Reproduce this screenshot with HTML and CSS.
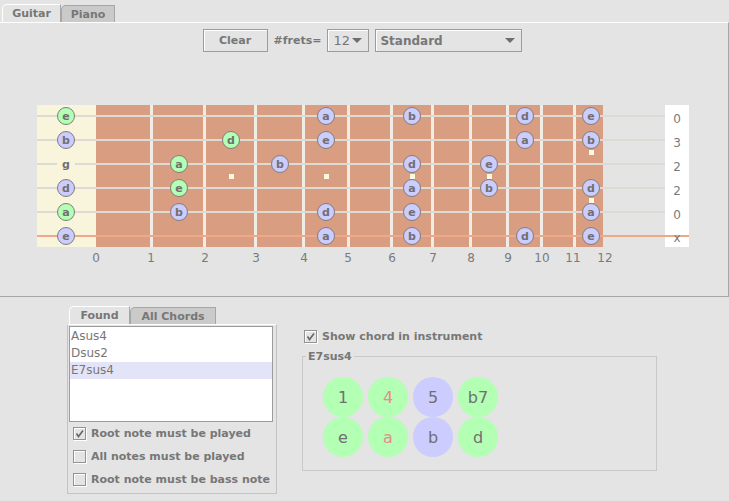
FILE: index.html
```html
<!DOCTYPE html>
<html>
<head>
<meta charset="utf-8">
<link rel="stylesheet" href="styles.css">
</head>
<body>
<div class="app">
  <div class="tabs top-tabs">
    <div class="tab active guitar">Guitar</div>
    <div class="tab piano">Piano</div>
  </div>
  <div class="panel">
    <div class="toolbar">
      <div class="button">Clear</div>
      <span class="label">#frets=</span>
      <div class="combo small"><span class="num">12</span><span class="arrow"></span></div>
      <div class="combo wide"><span>Standard</span><span class="arrow"></span></div>
    </div>
    <svg class="fretboard" width="729" height="170" viewBox="0 100 729 170" shape-rendering="crispEdges">
      <rect class="nut" x="37" y="105" width="59" height="142"/>
      <rect class="board" x="96" y="105" width="507" height="142"/>
      <g class="frets">
        <rect x="150" y="105" width="3" height="142"/>
        <rect x="203" y="105" width="3" height="142"/>
        <rect x="254" y="105" width="3" height="142"/>
        <rect x="302" y="105" width="3" height="142"/>
        <rect x="347" y="105" width="3" height="142"/>
        <rect x="390" y="105" width="3" height="142"/>
        <rect x="431" y="105" width="3" height="142"/>
        <rect x="469" y="105" width="3" height="142"/>
        <rect x="506" y="105" width="3" height="142"/>
        <rect x="540" y="105" width="3" height="142"/>
        <rect x="573" y="105" width="3" height="142"/>
      </g>
      <g class="strings">
        <rect x="37" y="115" width="628" height="2"/>
        <rect x="37" y="139" width="628" height="2"/>
        <rect x="37" y="163" width="628" height="2"/>
        <rect x="37" y="187" width="628" height="2"/>
        <rect x="37" y="211" width="628" height="2"/>
      </g>
      <rect class="tuning-box" x="665" y="105" width="24" height="142"/>
      <rect class="low-e" x="37" y="235" width="652" height="2"/>
      <rect class="nut" x="57" y="158" width="18" height="12"/>
      <text class="open" x="66" y="168">g</text>
      <g class="markers">
        <rect x="229" y="174" width="5" height="5"/>
        <rect x="324" y="174" width="5" height="5"/>
        <rect x="410" y="174" width="5" height="5"/>
        <rect x="487" y="174" width="5" height="5"/>
        <rect x="589" y="150" width="5" height="5"/>
        <rect x="589" y="198" width="5" height="5"/>
      </g>
      <g shape-rendering="auto">
        <g class="ng"><circle cx="66" cy="116" r="8.5"/><text x="66" y="120">e</text></g>
        <g class="nl"><circle cx="66" cy="140" r="8.5"/><text x="66" y="144">b</text></g>
        <g class="nl"><circle cx="66" cy="188" r="8.5"/><text x="66" y="192">d</text></g>
        <g class="ng"><circle cx="66" cy="212" r="8.5"/><text x="66" y="216">a</text></g>
        <g class="nl"><circle cx="66" cy="236" r="8.5"/><text x="66" y="240">e</text></g>

        <g class="ng"><circle cx="179" cy="164" r="8.5"/><text x="179" y="168">a</text></g>
        <g class="ng"><circle cx="179" cy="188" r="8.5"/><text x="179" y="192">e</text></g>
        <g class="nl"><circle cx="179" cy="212" r="8.5"/><text x="179" y="216">b</text></g>

        <g class="ng"><circle cx="231" cy="140" r="8.5"/><text x="231" y="144">d</text></g>

        <g class="nl"><circle cx="280" cy="164" r="8.5"/><text x="280" y="168">b</text></g>

        <g class="nl"><circle cx="326" cy="116" r="8.5"/><text x="326" y="120">a</text></g>
        <g class="nl"><circle cx="326" cy="140" r="8.5"/><text x="326" y="144">e</text></g>
        <g class="nl"><circle cx="326" cy="212" r="8.5"/><text x="326" y="216">d</text></g>
        <g class="nl"><circle cx="326" cy="236" r="8.5"/><text x="326" y="240">a</text></g>

        <g class="nl"><circle cx="412" cy="116" r="8.5"/><text x="412" y="120">b</text></g>
        <g class="nl"><circle cx="412" cy="164" r="8.5"/><text x="412" y="168">d</text></g>
        <g class="nl"><circle cx="412" cy="188" r="8.5"/><text x="412" y="192">a</text></g>
        <g class="nl"><circle cx="412" cy="212" r="8.5"/><text x="412" y="216">e</text></g>
        <g class="nl"><circle cx="412" cy="236" r="8.5"/><text x="412" y="240">b</text></g>

        <g class="nl"><circle cx="489" cy="164" r="8.5"/><text x="489" y="168">e</text></g>
        <g class="nl"><circle cx="489" cy="188" r="8.5"/><text x="489" y="192">b</text></g>

        <g class="nl"><circle cx="525" cy="116" r="8.5"/><text x="525" y="120">d</text></g>
        <g class="nl"><circle cx="525" cy="140" r="8.5"/><text x="525" y="144">a</text></g>
        <g class="nl"><circle cx="525" cy="236" r="8.5"/><text x="525" y="240">d</text></g>

        <g class="nl"><circle cx="591" cy="116" r="8.5"/><text x="591" y="120">e</text></g>
        <g class="nl"><circle cx="591" cy="140" r="8.5"/><text x="591" y="144">b</text></g>
        <g class="nl"><circle cx="591" cy="188" r="8.5"/><text x="591" y="192">d</text></g>
        <g class="nl"><circle cx="591" cy="212" r="8.5"/><text x="591" y="216">a</text></g>
        <g class="nl"><circle cx="591" cy="236" r="8.5"/><text x="591" y="240">e</text></g>
      </g>
      <g class="tuning">
        <text x="677" y="123">0</text>
        <text x="677" y="147">3</text>
        <text x="677" y="171">2</text>
        <text x="677" y="195">2</text>
        <text x="677" y="219">0</text>
        <text x="677" y="242">x</text>
      </g>
      <g class="fretnums">
        <text x="96" y="262">0</text>
        <text x="151" y="262">1</text>
        <text x="205" y="262">2</text>
        <text x="256" y="262">3</text>
        <text x="304" y="262">4</text>
        <text x="348" y="262">5</text>
        <text x="392" y="262">6</text>
        <text x="433" y="262">7</text>
        <text x="471" y="262">8</text>
        <text x="508" y="262">9</text>
        <text x="542" y="262">10</text>
        <text x="573" y="262">11</text>
        <text x="605" y="262">12</text>
      </g>
    </svg>
  </div>
  <div class="bottom">
    <div class="chords">
      <div class="tabs sub-tabs">
        <div class="tab active found">Found</div>
        <div class="tab all">All Chords</div>
      </div>
      <div class="subpanel">
        <ul class="list">
          <li>Asus4</li>
          <li>Dsus2</li>
          <li class="selected">E7sus4</li>
        </ul>
        <div class="options">
          <label class="check"><span class="box"><svg viewBox="0 0 11 11" width="11" height="11"><path d="M2.5 5.5 L4.5 8.5 L9 2.5"/></svg></span>Root note must be played</label>
          <label class="check"><span class="box"></span>All notes must be played</label>
          <label class="check"><span class="box"></span>Root note must be bass note</label>
        </div>
      </div>
    </div>
    <div class="detail">
      <label class="check show"><span class="box"><svg viewBox="0 0 11 11" width="11" height="11"><path d="M2.5 5.5 L4.5 8.5 L9 2.5"/></svg></span>Show chord in instrument</label>
      <fieldset class="group">
        <legend>E7sus4</legend>
        <div class="notes">
          <div class="note green">1</div>
          <div class="note green red">4</div>
          <div class="note lav">5</div>
          <div class="note green">b7</div>
          <div class="note green">e</div>
          <div class="note green red">a</div>
          <div class="note lav">b</div>
          <div class="note green">d</div>
        </div>
      </fieldset>
    </div>
  </div>
</div>
</body>
</html>
```

FILE: styles.css
```css
* { box-sizing: border-box; }

body {
  margin: 0;
  background: #e4e4e4;
  font-family: "DejaVu Sans", sans-serif;
  font-size: 11px;
  font-weight: bold;
  color: #777;
}

.app {
  width: 729px;
  height: 501px;
  overflow: hidden;
}

/* tabs */
.tabs {
  display: flex;
  align-items: flex-end;
}

.tab {
  height: 17px;
  display: flex;
  align-items: center;
  justify-content: center;
  background: #cacaca;
  border: 1px solid #a6a6a6;
  border-bottom: none;
  border-top-left-radius: 5px;
}

.tab.active {
  height: 18px;
  background: #e4e4e4;
  border-color: #fff #a6a6a6 #fff #fff;
}

.top-tabs {
  height: 22px;
  padding-left: 2px;
}

.guitar { width: 59px; }
.piano { width: 54px; }

.panel {
  height: 275px;
  border-top: 1px solid #fff;
  border-right: 1px solid #a6a6a6;
  border-bottom: 1px solid #a6a6a6;
}

/* toolbar */
.toolbar {
  display: flex;
  justify-content: center;
  align-items: center;
  gap: 6px;
  margin-top: 6px;
  height: 23px;
  padding-right: 3px;
}

.button {
  width: 65px;
  height: 23px;
  display: flex;
  align-items: center;
  justify-content: center;
  border: 1px solid #9c9c9c;
  box-shadow: inset 1px 1px 0 #fff;
}

.combo {
  height: 23px;
  display: flex;
  align-items: center;
  justify-content: space-between;
  border: 1px solid #9c9c9c;
  box-shadow: inset 1px 1px 0 #fff;
  padding: 0 6px 0 5px;
  font-size: 12px;
}

.combo .num {
  font-weight: normal;
  font-size: 13px;
}

.combo.small { width: 42px; }
.combo.wide { width: 147px; padding-left: 4px; }

.arrow {
  width: 0;
  height: 0;
  border-left: 5px solid transparent;
  border-right: 5px solid transparent;
  border-top: 5px solid #6e6e6e;
}

/* fretboard */
.fretboard {
  display: block;
  margin-top: 48px;
}

.fretboard .nut { fill: #f9f4dc; }
.fretboard .board { fill: #d99e81; }
.fretboard .frets rect { fill: #f1ede6; }
.fretboard .strings rect { fill: #dedad6; }
.fretboard .low-e { fill: #efa98a; }
.fretboard .tuning-box { fill: #ffffff; }
.fretboard .markers rect { fill: #fff8dc; }

.fretboard circle {
  stroke: #7e7e7e;
  stroke-width: 1;
}

.fretboard .ng circle { fill: #b3ffb3; }
.fretboard .nl circle { fill: #ccccff; }

.fretboard text {
  font-family: "DejaVu Sans", sans-serif;
  font-size: 11px;
  font-weight: bold;
  fill: #707070;
  text-anchor: middle;
}

.fretboard .tuning text,
.fretboard .fretnums text {
  font-weight: normal;
  font-size: 12px;
  fill: #7a7a7a;
}

/* bottom */
.bottom {
  display: flex;
  padding-top: 9px;
}

.chords {
  margin-left: 67px;
  width: 210px;
}

.sub-tabs {
  height: 18px;
  padding-left: 2px;
}

.found { width: 61px; }
.all { width: 86px; }

.subpanel {
  height: 170px;
  border: 1px solid #c2c2c2;
  border-top-color: #fff;
  padding: 1px 3px 0 1px;
}

.list {
  list-style: none;
  margin: 0;
  height: 96px;
  padding: 1px 0 0 0;
  background: #fff;
  border: 1px solid #9c9c9c;
  font-weight: normal;
  font-size: 12px;
}

.list li {
  height: 17px;
  line-height: 17px;
  padding-left: 1px;
}

.list li.selected {
  background: #e4e4f8;
}

.options {
  display: flex;
  flex-direction: column;
}

.check {
  display: flex;
  align-items: center;
  gap: 5px;
}

.options .check {
  height: 23px;
  padding-left: 4px;
}

.options .check:last-child { height: 22px; }

.box {
  width: 13px;
  height: 13px;
  border: 1px solid #939393;
  box-shadow: inset 1px 1px 0 #fff, 1px 1px 0 #fff;
  display: flex;
  align-items: center;
  justify-content: center;
}

.box svg path {
  fill: none;
  stroke: #666;
  stroke-width: 1.6;
}

.detail {
  margin-left: 25px;
  padding-top: 23px;
}

.check.show {
  height: 14px;
  padding-left: 2px;
}

.group {
  margin: 7px 0 0 0;
  width: 355px;
  height: 121px;
  border: 1px solid #c8c8c8;
  padding: 14px 0 0 0;
}

.group legend {
  padding: 0 2px;
  margin-left: 3px;
  font-size: 11px;
}

.notes {
  display: grid;
  grid-template-columns: repeat(4, 40px);
  grid-auto-rows: 40px;
  column-gap: 5px;
  margin-left: 20px;
}

.note {
  width: 40px;
  height: 40px;
  border-radius: 50%;
  display: flex;
  align-items: center;
  justify-content: center;
  font-size: 16px;
  font-weight: normal;
  color: #707070;
}

.note.green { background: #b3ffb3; }
.note.lav { background: #ccccff; }
.note.red { color: #e58c8c; }
```
